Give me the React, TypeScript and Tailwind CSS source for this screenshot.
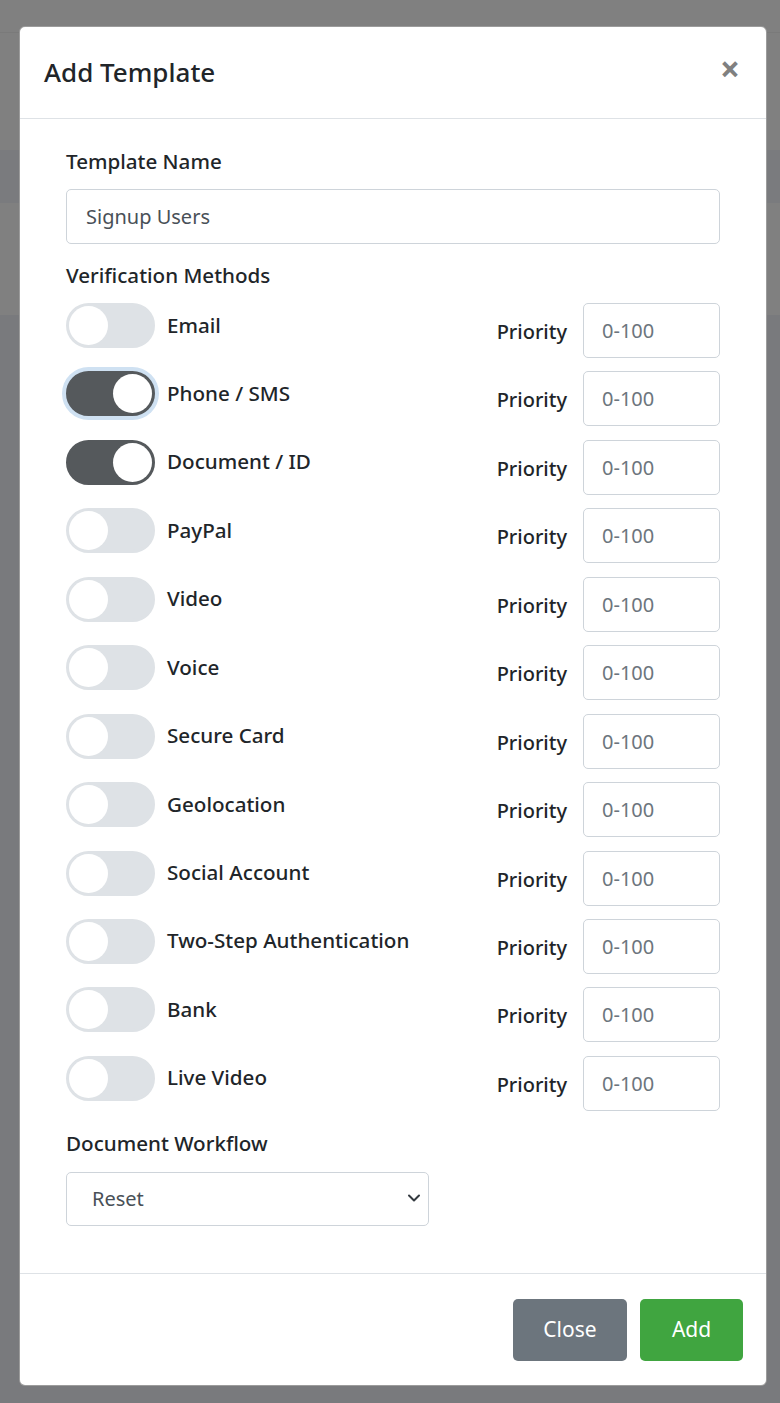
import React, { useState } from "react"

type Method = {
	name: string,
	on: boolean,
	focused?: boolean,
}

const initialMethods: Method[] = [
	{ name: "Email", on: false },
	{ name: "Phone / SMS", on: true, focused: true },
	{ name: "Document / ID", on: true },
	{ name: "PayPal", on: false },
	{ name: "Video", on: false },
	{ name: "Voice", on: false },
	{ name: "Secure Card", on: false },
	{ name: "Geolocation", on: false },
	{ name: "Social Account", on: false },
	{ name: "Two-Step Authentication", on: false },
	{ name: "Bank", on: false },
	{ name: "Live Video", on: false },
]

const Toggle: React.FC<{ on: boolean, focused?: boolean, onClick: () => void }> = ({ on, focused, onClick }) => {
	return (
		<button
			type="button"
			onClick={onClick}
			className={
				on
					? "flex shrink-0 w-[89px] h-[45px] rounded-full border-[3px] border-[#55595c] bg-[#55595c] justify-end " + (focused ? "ring-4 ring-[#cfe1f2]" : "")
					: "flex shrink-0 w-[89px] h-[45px] rounded-full border-[3px] border-[#dee2e6] bg-[#dee2e6] justify-start"
			}
		>
			<span className="block w-[39px] h-[39px] rounded-full bg-white" />
		</button>
	)
}

export const App: React.FC = () => {
	const [methods, setMethods] = useState<Method[]>(initialMethods)
	const [templateName, setTemplateName] = useState("Signup Users")

	const flip = (idx: number) => {
		const updated = [...methods]
		updated[idx] = { ...updated[idx], on: !updated[idx].on }
		setMethods(updated)
	}

	return (
		<div className="relative w-[780px] h-[1403px] overflow-hidden font-['Noto_Sans',sans-serif] text-[#212529]">
			{/* page behind the backdrop */}
			<div className="flex flex-col h-full">
				<div className="h-[32px] bg-[#808080]" />
				<div className="h-px bg-[#7a7a7a]" />
				<div className="h-[117px] bg-[#808080]" />
				<div className="h-[53px] bg-[#7a7b7e]" />
				<div className="h-[112px] bg-[#808080]" />
				<div className="flex-1 bg-[#797a7d]" />
			</div>

			{/* modal */}
			<div className="absolute inset-0">
				<div className="ml-[19px] mt-[26px] w-[748px] h-[1360px] flex flex-col bg-white border border-[#5a5a5a]/60 rounded-[6px]">
					<div className="h-[92px] shrink-0 flex items-center justify-between pl-[24px] pr-[26px] border-b border-[#dee2e6]">
						<h2 className="text-[26px] font-medium leading-none -mt-[2px]">Add Template</h2>
						<button type="button" className="text-[35px] font-bold leading-none text-[#808080] -mt-[8px]">×</button>
					</div>

					<form className="flex-1 flex flex-col pl-[46px] pr-[46px] pt-[27px] text-[20px]">
						<label htmlFor="template_name" className="block font-medium text-[20.6px] leading-[30px]">Template Name</label>
						<input
							id="template_name"
							value={templateName}
							onChange={ev => setTemplateName(ev.currentTarget.value)}
							className="mt-[13px] h-[55px] w-full border border-[#ced4da] rounded-[5px] px-[19px] text-[#495057] outline-none"
						/>

						<div className="mt-[16px] font-medium text-[20.6px] leading-[30px]">Verification Methods</div>

						<div className="mt-[13px] flex flex-col gap-[13.45px]">
							{methods.map((m, idx) => (
								<div key={m.name} className="flex items-start h-[55px]">
									<div className="flex items-center gap-[12px]">
										<Toggle on={m.on} focused={m.focused} onClick={() => flip(idx)} />
										<span className="font-medium text-[20.6px] leading-[30px] -mt-[2px]">{m.name}</span>
									</div>
									<div className="ml-auto flex items-center h-[55px]">
										<span className="font-medium mr-[16px] mt-[3px]">Priority</span>
										<input
											placeholder="0-100"
											className="w-[137px] h-[55px] border border-[#ced4da] rounded-[5px] px-[18px] text-[#495057] placeholder:text-[#6c757d] outline-none"
										/>
									</div>
								</div>
							))}
						</div>

						<label htmlFor="workflow" className="mt-[17px] block font-medium text-[20.6px] leading-[30px]">Document Workflow</label>
						<div className="mt-[14px] relative w-[363px]">
							<select
								id="workflow"
								className="appearance-none w-full h-[54px] border border-[#ced4da] rounded-[5px] pl-[25px] text-[#495057] bg-white outline-none"
							>
								<option>Reset</option>
							</select>
							<svg className="absolute right-[8px] top-[21px] pointer-events-none" width="14" height="10" viewBox="0 0 14 10" fill="none">
								<path d="M2 2.5l5 5 5-5" stroke="#343a40" strokeWidth="2" strokeLinecap="round" strokeLinejoin="round" />
							</svg>
						</div>
					</form>

					<div className="shrink-0 flex justify-end gap-[13px] border-t border-[#dee2e6] pt-[25px] pb-[24px] pr-[23px]">
						<button type="button" className="w-[114px] h-[62px] rounded-[5px] bg-[#6c757d] text-white text-[21px]">Close</button>
						<button type="button" className="w-[103px] h-[62px] rounded-[5px] bg-[#40a540] text-white text-[21px]">Add</button>
					</div>
				</div>
			</div>
		</div>
	)
}

export default App
